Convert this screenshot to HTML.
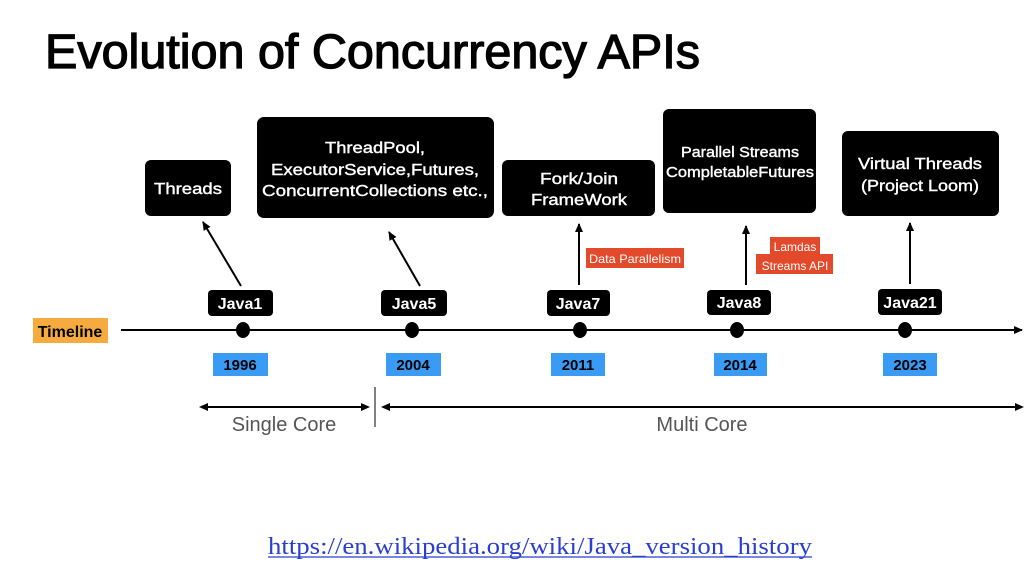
<!DOCTYPE html>
<html><head><meta charset="utf-8"><style>
html,body{margin:0;padding:0;background:#fff;}
svg{display:block;}
text{font-family:"Liberation Sans",Arial,sans-serif;}
</style></head><body>
<svg width="1036" height="564" viewBox="0 0 1036 564" xmlns="http://www.w3.org/2000/svg">
<defs>
<marker id="ah" markerWidth="10" markerHeight="10" refX="8" refY="5" orient="auto" markerUnits="userSpaceOnUse">
<path d="M0,1 L9,5 L0,9 Z" fill="#000"/></marker>
</defs>
<text x="45" y="68" font-size="48" fill="#000" stroke="#000" stroke-width="1.3" textLength="655" lengthAdjust="spacingAndGlyphs">Evolution of Concurrency APIs</text>

<!-- boxes -->
<g fill="#000">
<rect x="145" y="160" width="86" height="56" rx="6"/>
<rect x="257" y="117" width="237" height="101" rx="7"/>
<rect x="502" y="160" width="153" height="56" rx="6"/>
<rect x="663" y="109" width="153" height="104" rx="6"/>
<rect x="842" y="131" width="157" height="85" rx="6"/>
</g>
<g fill="#fff" stroke="#fff" stroke-width="0.4" font-size="16" text-anchor="middle">
<text x="188" y="194" textLength="68" lengthAdjust="spacingAndGlyphs">Threads</text>
<text x="375" y="153" textLength="100" lengthAdjust="spacingAndGlyphs">ThreadPool,</text>
<text x="375" y="175" textLength="208" lengthAdjust="spacingAndGlyphs">ExecutorService,Futures,</text>
<text x="375" y="196" textLength="226" lengthAdjust="spacingAndGlyphs">ConcurrentCollections etc.,</text>
<text x="579" y="184" textLength="78" lengthAdjust="spacingAndGlyphs">Fork/Join</text>
<text x="579" y="205" textLength="96" lengthAdjust="spacingAndGlyphs">FrameWork</text>
<text x="740" y="157" font-size="15" textLength="118" lengthAdjust="spacingAndGlyphs">Parallel Streams</text>
<text x="740" y="177" font-size="15" textLength="148" lengthAdjust="spacingAndGlyphs">CompletableFutures</text>
<text x="920" y="169" textLength="124" lengthAdjust="spacingAndGlyphs">Virtual Threads</text>
<text x="920" y="191" textLength="118" lengthAdjust="spacingAndGlyphs">(Project Loom)</text>
</g>

<!-- arrows up -->
<g stroke="#000" stroke-width="2" marker-end="url(#ah)">
<line x1="241" y1="286" x2="203" y2="222"/>
<line x1="420" y1="286" x2="389" y2="232"/>
<line x1="579" y1="285" x2="579" y2="224"/>
<line x1="746" y1="285" x2="746" y2="226"/>
<line x1="910" y1="284" x2="910" y2="223"/>
</g>

<!-- red labels -->
<rect x="586" y="248" width="98" height="20" fill="#e34a2b"/>
<text x="635" y="263" font-size="12" fill="#fff" text-anchor="middle" textLength="92" lengthAdjust="spacingAndGlyphs">Data Parallelism</text>
<rect x="770" y="237" width="50" height="18" fill="#e34a2b"/>
<rect x="756" y="254" width="77" height="20" fill="#e34a2b"/>
<text x="795" y="251" font-size="12" fill="#fff" text-anchor="middle">Lamdas</text>
<text x="795" y="270" font-size="12" fill="#fff" text-anchor="middle">Streams API</text>

<!-- java labels -->
<g fill="#000">
<rect x="208" y="290" width="65" height="26" rx="4"/>
<rect x="381" y="290" width="66" height="26" rx="4"/>
<rect x="547" y="290" width="63" height="26" rx="4"/>
<rect x="707" y="290" width="64" height="25" rx="4"/>
<rect x="878" y="289" width="64" height="26" rx="4"/>
</g>
<g fill="#fff" font-size="16" font-weight="bold" text-anchor="middle">
<text x="240" y="309">Java1</text>
<text x="414" y="309">Java5</text>
<text x="578" y="309">Java7</text>
<text x="739" y="308">Java8</text>
<text x="910" y="308">Java21</text>
</g>

<!-- timeline -->
<rect x="33" y="318" width="75" height="25" fill="#f6ab3e"/>
<text x="70" y="337" font-size="16" font-weight="bold" text-anchor="middle" fill="#000">Timeline</text>
<line x1="121" y1="330" x2="1022" y2="330" stroke="#000" stroke-width="2" marker-end="url(#ah)"/>
<g fill="#000">
<ellipse cx="243" cy="330" rx="7" ry="8"/>
<ellipse cx="412" cy="330" rx="7" ry="8"/>
<ellipse cx="580" cy="330" rx="7" ry="8"/>
<ellipse cx="737" cy="330" rx="7" ry="8"/>
<ellipse cx="905" cy="330" rx="7" ry="8"/>
</g>

<!-- years -->
<g fill="#3a9bf4">
<rect x="213" y="353" width="55" height="23"/>
<rect x="386" y="353" width="55" height="23"/>
<rect x="551" y="353" width="54" height="23"/>
<rect x="714" y="353" width="53" height="23"/>
<rect x="883" y="353" width="54" height="23"/>
</g>
<g fill="#000" font-size="15" font-weight="bold" text-anchor="middle">
<text x="240" y="370">1996</text>
<text x="413" y="370">2004</text>
<text x="578" y="370">2011</text>
<text x="740" y="370">2014</text>
<text x="910" y="370">2023</text>
</g>

<!-- cores -->
<g stroke="#000" stroke-width="2">
<line x1="206" y1="407" x2="363" y2="407"/>
<line x1="388" y1="407" x2="1016" y2="407"/>
</g>
<path d="M199,407 L208,403 L208,411 Z M370,407 L361,403 L361,411 Z M381,407 L390,403 L390,411 Z M1024,407 L1015,403 L1015,411 Z" fill="#000"/>
<line x1="375" y1="387" x2="375" y2="427" stroke="#555" stroke-width="1.5"/>
<text x="284" y="431" font-size="20" fill="#555" text-anchor="middle">Single Core</text>
<text x="702" y="431" font-size="20" fill="#555" text-anchor="middle">Multi Core</text>

<text x="268" y="554" font-size="24" fill="#2a3fcf" textLength="544" lengthAdjust="spacingAndGlyphs" style="font-family:'Liberation Serif',serif">https://en.wikipedia.org/wiki/Java_version_history</text>
<line x1="268" y1="557" x2="812" y2="557" stroke="#2a3fcf" stroke-width="1.2"/>
</svg>
</body></html>
